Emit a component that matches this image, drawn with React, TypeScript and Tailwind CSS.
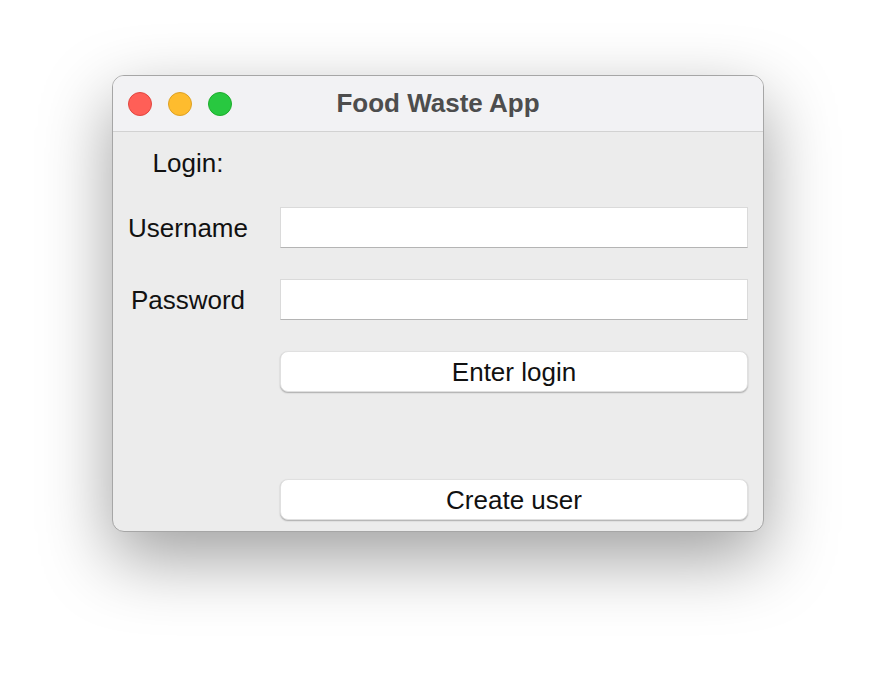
const FONT = { fontFamily: '"Liberation Sans", Arial, sans-serif' };

function TrafficLights() {
    return (
        <div className="flex items-center gap-[16px]">
            <span className="w-[24px] h-[24px] rounded-full bg-[#ff5f57] border border-[#e2463f]" />
            <span className="w-[24px] h-[24px] rounded-full bg-[#febc2e] border border-[#dea123]" />
            <span className="w-[24px] h-[24px] rounded-full bg-[#28c840] border border-[#1dad2b]" />
        </div>
    );
}

function Field({ label }: { label: string }) {
    return (
        <div className="flex items-center">
            <div className="w-[150px] text-center text-[26px] leading-[30px] text-[#111]">{label}</div>
            <input
                className="ml-[17px] w-[468px] h-[41px] bg-white border border-[#dadada] border-b-[#b4b4b4] outline-none px-2 text-[22px]"
                type={label === 'Password' ? 'password' : 'text'}
            />
        </div>
    );
}

function MacButton({ children }: { children: React.ReactNode }) {
    return (
        <div className="flex">
            <div className="w-[167px]" />
            <button className="w-[468px] h-[41px] bg-white rounded-[8px] border border-[#e0e0e0] shadow-[0_1px_1.5px_rgba(0,0,0,0.28)] text-[26px] leading-[30px] text-[#111]">
                {children}
            </button>
        </div>
    );
}

export default function App() {
    return (
        <div className="w-[876px] h-[680px] bg-white pt-[75px] pl-[112px]" style={FONT}>
            <div className="w-[652px] h-[457px] rounded-[12px] border border-[#a6a6a6] bg-[#ececec] overflow-hidden shadow-[0_26px_70px_rgba(0,0,0,0.38)] flex flex-col">
                {/* Title bar */}
                <div className="relative h-[56px] bg-[#f2f2f4] border-b border-[#d2d2d2] flex items-center pl-[15px] shrink-0">
                    <TrafficLights />
                    <div className="absolute inset-0 flex items-center justify-center text-[26px] font-bold text-[#4d4d4d] pointer-events-none">
                        Food Waste App
                    </div>
                </div>

                {/* Content */}
                <div className="flex flex-col pt-[16px]">
                    <div className="w-[150px] text-center text-[26px] leading-[30px] text-[#111]">Login:</div>
                    <div className="mt-[29px] flex flex-col gap-[31px]">
                        <Field label="Username" />
                        <Field label="Password" />
                        <MacButton>Enter login</MacButton>
                    </div>
                    <div className="mt-[87px]">
                        <MacButton>Create user</MacButton>
                    </div>
                </div>
            </div>
        </div>
    );
}
